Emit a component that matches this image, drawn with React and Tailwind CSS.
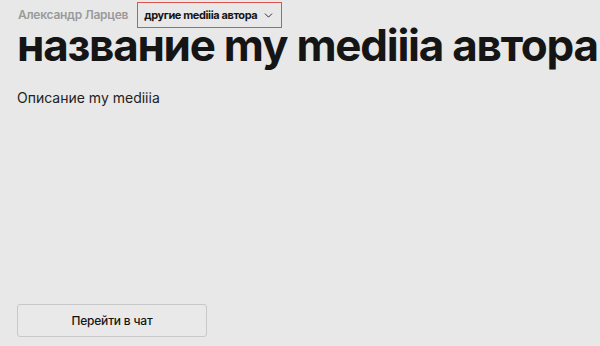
import { ChevronDown } from 'lucide-react'

export default function App() {
  return (
    <div className="w-[600px] h-[346px] bg-[#e8e8e8] px-[17px] flex flex-col overflow-hidden" style={{ fontFamily: 'Inter, "Noto Sans", sans-serif' }}>
      {/* Шапка: автор и выпадающий список */}
      <div className="flex items-center gap-[9px] pt-[2px]">
        <span className="text-[12px] font-semibold text-[#9a9a9a] tracking-[-0.25px] pl-[1px]">Александр Ларцев</span>
        <button className="flex items-center gap-[5px] h-[26px] pl-[6px] pr-[6px] border border-[#d9534f] text-[11px] font-bold tracking-[-0.4px] text-[#151515]">
          другие mediiia автора
          <ChevronDown size={13} strokeWidth={1.6} />
        </button>
      </div>

      <h1 className="text-[44px] leading-[36px] font-bold text-[#151515] tracking-[-1.25px] mt-[-1px] whitespace-nowrap">
        название my mediiia автора
      </h1>

      <p className="text-[14px] text-[#222] mt-[24px]">Описание my mediiia</p>

      <div className="mt-auto pb-[9px]">
        <button className="w-[190px] h-[33px] border border-[#c8c8c8] rounded-[3px] bg-[#e9e9e9] text-[12px] font-medium tracking-[-0.2px] text-[#151515]">
          Перейти в чат
        </button>
      </div>
    </div>
  )
}
